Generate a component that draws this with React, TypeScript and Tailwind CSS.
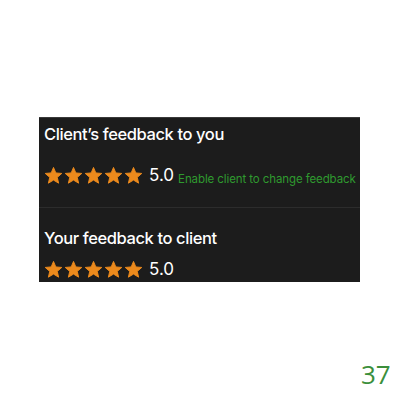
const Star = () => (
  <svg viewBox="0 0 24 24" className="h-[19px] w-[19px]" aria-hidden>
    <path
      d="M12 1.8L14.94 8.76L22.46 9.4L16.76 14.35L18.47 21.7L12 17.8L5.53 21.7L7.24 14.35L1.54 9.4L9.06 8.76Z"
      fill="#ec8a1c"
      stroke="#ec8a1c"
      strokeWidth="1.2"
      strokeLinejoin="round"
    />
  </svg>
);

const Rating = ({ value }: { value: string }) => (
  <div className="flex items-center">
    <div className="flex gap-px">
      {[0, 1, 2, 3, 4].map((i) => (
        <Star key={i} />
      ))}
    </div>
    <span className="ml-[6px] text-[17px] leading-none text-white">{value}</span>
  </div>
);

export default function App() {
  return (
    <div className="relative h-[400px] w-[400px] bg-white font-['Inter',sans-serif]">
      <div className="absolute left-0 top-0 pl-[39px] pt-[117px]">
        <section className="flex h-[165px] w-[321px] flex-col overflow-hidden bg-[#1c1c1c] border-t border-[#3a3a3a]">
          <div className="flex flex-col px-[5px] pt-[5px]">
            <h3 className="text-[16.5px] font-medium leading-[22px] tracking-[-0.4px] text-white">
              Client’s feedback to you
            </h3>
            <div className="mt-[21px] flex items-end">
              <Rating value="5.0" />
              <span className="ml-[4px] whitespace-nowrap text-[11.5px] leading-none tracking-[-0.1px] text-[#2f9a2f]">
                Enable client to change feedback
              </span>
            </div>
          </div>
          <div className="mt-[22px] h-px bg-[#2c2c2c]" />
          <div className="flex flex-col px-[5px] pt-[19px]">
            <h3 className="text-[16.5px] font-medium leading-[22px] tracking-[-0.4px] text-white">
              Your feedback to client
            </h3>
            <div className="mt-[11px]">
              <Rating value="5.0" />
            </div>
          </div>
        </section>
      </div>
      <span className="absolute left-[361px] top-[355px] font-['Open_Sans',sans-serif] text-[26px] text-[#3b8f3b]">
        37
      </span>
    </div>
  );
}
